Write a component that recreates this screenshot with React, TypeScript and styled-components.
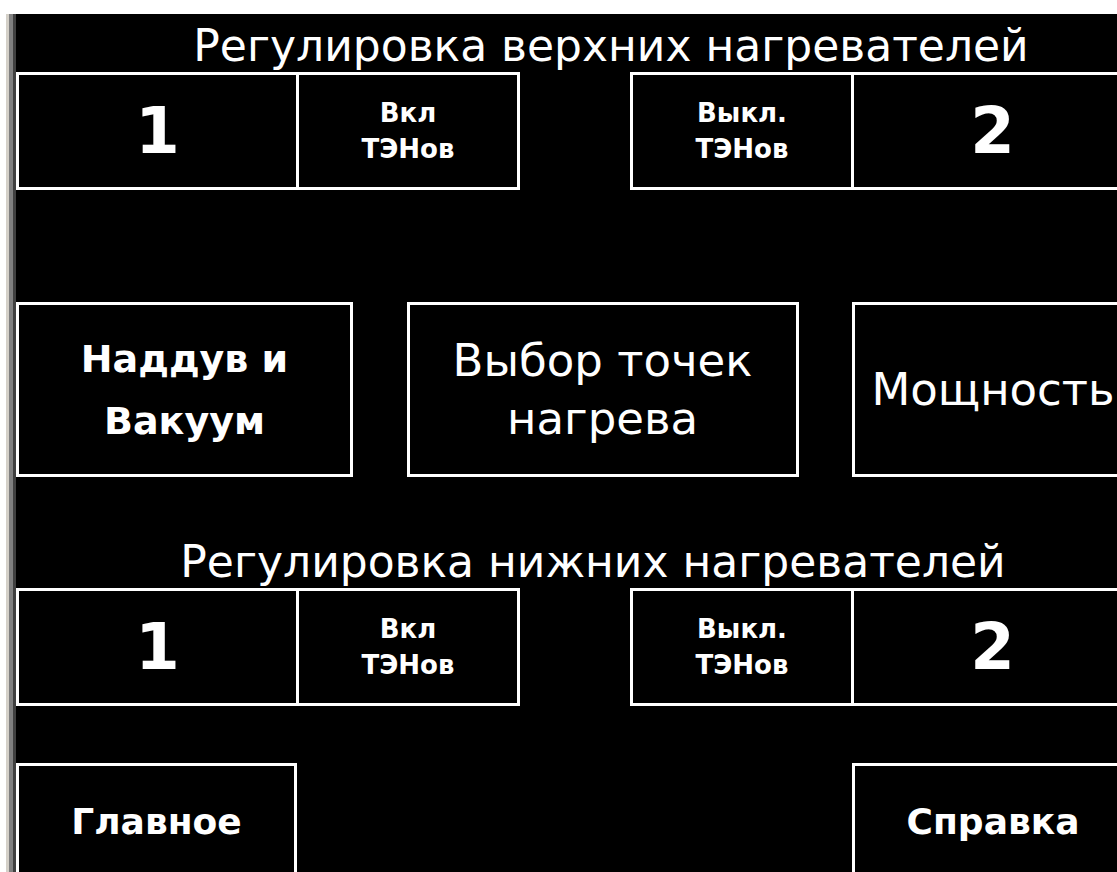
import React from "react";
import styled, { createGlobalStyle } from "styled-components";

const Global = createGlobalStyle`
  html, body {
    margin: 0;
    padding: 0;
    background: #ffffff;
    overflow: hidden;
  }
  body {
    font-family: "DejaVu Sans", "Noto Sans", sans-serif;
  }
`;

/* Window frame: light and mid grey bevel on the left edge of the panel */
const Frame = styled.div`
  margin: 14px 0 0 6px;
  border-left: 3px solid #d4d0c8;
  width: 1128px;
`;

const Screen = styled.main`
  box-sizing: border-box;
  height: 858px;
  padding: 6px 0 0 3px;
  border-left: 4px solid #808080;
  box-shadow: inset 3px 0 0 #404040;
  background: #000000;
  color: #ffffff;
  display: flex;
  flex-direction: column;
`;

const Heading = styled.h2<{ $gap?: number; $indent: number }>`
  margin: ${(p) => p.$gap ?? 0}px 0 0;
  width: 1118px;
  padding-left: ${(p) => p.$indent}px;
  box-sizing: border-box;
  font-size: 44px;
  font-weight: normal;
  line-height: 52px;
  height: 52px;
  text-align: center;
  white-space: nowrap;
`;

const PairRow = styled.div`
  width: 1118px;
  display: flex;
  justify-content: space-between;
  height: 118px;
`;

const Pair = styled.div`
  box-sizing: border-box;
  display: flex;
  border: 3px solid #ffffff;
  height: 118px;
`;

const Cell = styled.div<{ $w: number }>`
  width: ${(p) => p.$w}px;
  display: flex;
  align-items: center;
  justify-content: center;
  & + & {
    border-left: 3px solid #ffffff;
  }
`;

const Digit = styled.span`
  font-size: 64px;
  font-weight: bold;
  line-height: 1;
`;

const Caption = styled.span`
  font-size: 26px;
  font-weight: bold;
  line-height: 36px;
  text-align: center;
  display: flex;
  flex-direction: column;
  align-items: center;
`;

const TileRow = styled.div`
  margin-top: 112px;
  width: 1118px;
  display: grid;
  grid-template-columns: 337px 392px 282px;
  justify-content: space-between;
  height: 175px;
`;

const Tile = styled.button<{ $bold?: boolean; $lh?: number }>`
  box-sizing: border-box;
  height: 175px;
  margin: 0;
  padding: 0;
  border: 3px solid #ffffff;
  background: #000000;
  color: #ffffff;
  font-family: inherit;
  font-size: ${(p) => (p.$bold ? 38 : 45)}px;
  font-weight: ${(p) => (p.$bold ? "bold" : "normal")};
  line-height: ${(p) => p.$lh ?? 56}px;
  display: flex;
  flex-direction: column;
  align-items: center;
  justify-content: center;
  white-space: nowrap;
`;

const NavRow = styled.div`
  margin-top: 57px;
  width: 1118px;
  display: flex;
  justify-content: space-between;
`;

const NavButton = styled.button<{ $w: number }>`
  box-sizing: border-box;
  width: ${(p) => p.$w}px;
  height: 130px;
  margin: 0;
  padding: 0 0 12px;
  border: 3px solid #ffffff;
  background: #000000;
  color: #ffffff;
  font-family: inherit;
  font-size: 36px;
  font-weight: bold;
  line-height: 1;
  display: flex;
  align-items: center;
  justify-content: center;
`;

function HeaterRow() {
  return (
    <PairRow>
      <Pair>
        <Cell $w={277}>
          <Digit>1</Digit>
        </Cell>
        <Cell $w={218}>
          <Caption>
            <span>Вкл</span>
            <span>ТЭНов</span>
          </Caption>
        </Cell>
      </Pair>
      <Pair>
        <Cell $w={218}>
          <Caption>
            <span>Выкл.</span>
            <span>ТЭНов</span>
          </Caption>
        </Cell>
        <Cell $w={277}>
          <Digit>2</Digit>
        </Cell>
      </Pair>
    </PairRow>
  );
}

export default function App() {
  return (
    <>
      <Global />
      <Frame>
        <Screen>
          <Heading $indent={72}>Регулировка верхних нагревателей</Heading>
          <HeaterRow />
          <TileRow>
            <Tile $bold $lh={62}>
              <span>Наддув и</span>
              <span>Вакуум</span>
            </Tile>
            <Tile $lh={58}>
              <span>Выбор точек</span>
              <span>нагрева</span>
            </Tile>
            <Tile>
              <span>Мощность</span>
            </Tile>
          </TileRow>
          <Heading $gap={59} $indent={36}>
            Регулировка нижних нагревателей
          </Heading>
          <HeaterRow />
          <NavRow>
            <NavButton $w={281}>Главное</NavButton>
            <NavButton $w={282}>Справка</NavButton>
          </NavRow>
        </Screen>
      </Frame>
    </>
  );
}
